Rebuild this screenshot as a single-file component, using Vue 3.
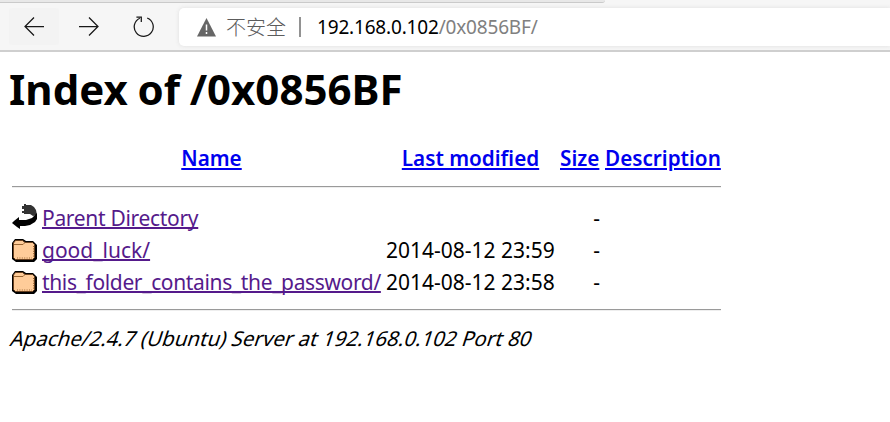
<script setup>
const rows = [
  { icon: 'back', name: 'Parent Directory', date: '', cls: 'parent' },
  { icon: 'folder', name: 'good_luck/', date: '2014-08-12 23:59', cls: 'luck' },
  { icon: 'folder', name: 'this_folder_contains_the_password/', date: '2014-08-12 23:58', cls: 'password' },
]
</script>

<template>
  <div class="window">
    <div class="tabs"><div class="tab-edge"></div></div>
    <nav class="toolbar">
      <button class="tool hovered" aria-label="Back">
        <svg width="20" height="20" viewBox="0 0 20 20"><path d="M20 9.5H1M10 0.5L1 9.5L10 18.5" /></svg>
      </button>
      <button class="tool" aria-label="Forward">
        <svg width="20" height="20" viewBox="0 0 20 20"><path d="M0 9.5H19M10 0.5L19 9.5L10 18.5" /></svg>
      </button>
      <button class="tool" aria-label="Reload">
        <svg width="22" height="22" viewBox="0 0 22 22"><path d="M14.2 2A9.5 9.5 0 1 1 6.8 2.2M3.4 1H8.3V6" /></svg>
      </button>
      <div class="address">
        <svg class="warning" width="19" height="19" viewBox="0 0 19 19">
          <path d="M9.5 0L19 18.5H0Z" fill="#666" />
          <path d="M9.5 6.5V12.5M9.5 14V16" stroke="#fff" stroke-width="1.5" />
        </svg>
        <span class="insecure">不安全</span>
        <span class="divider"></span>
        <span class="url"><span class="host">192.168.0.102</span>/0x0856BF/</span>
      </div>
    </nav>
    <main>
      <h1><span>Index of /0x0856BF</span></h1>
      <div class="row head">
        <a class="name-head">Name</a>
        <a class="modified">Last modified</a>
        <a class="size-head">Size</a>
        <a class="description">Description</a>
      </div>
      <hr class="first" />
      <div v-for="row in rows" :key="row.name" class="row">
        <svg v-if="row.icon === 'back'" class="icon" width="25" height="26" viewBox="0 0 25 26">
          <path d="M10 2H12V0H14V1H19L22 3L24 6L25 11L21 12L18 10H12V9H10V7H12V5H10Z" fill="#333" />
          <path d="M25 9V15L23 18L18 21L13 22H8V25L5 23L0 19L2 17L7 13V16H14L20 14L24 10Z" fill="#000" />
        </svg>
        <svg v-else class="icon folder" width="25" height="23" viewBox="0 0 25 23">
          <path d="M0 4L3 0H11L14 2H21L25 6V20L22 23H4L0 20Z" fill="#000" />
          <path d="M1.5 4L3.5 1.5H10.5L13 3.5H20.5L22.5 5.5V18.5L20.5 20.5H3.5L1.5 18.5Z" fill="#ffcc99" stroke="#68401f" stroke-width="1" />
          <path d="M2 5.5H11L13 3.5" fill="none" stroke="#996633" />
          <path d="M5 19H20M21.5 7V18" fill="none" stroke="#996633" stroke-dasharray="1 1.4" />
        </svg>
        <span class="name"><a :class="row.cls">{{ row.name }}</a></span>
        <span class="date">{{ row.date }}</span>
        <span class="size">-</span>
      </div>
      <hr class="last" />
      <address class="server"><span>Apache/2.4.7 (Ubuntu) Server at 192.168.0.102 Port 80</span></address>
    </main>
  </div>
</template>

<style>
body { margin: 0; background: #fff; overflow: hidden; }
</style>

<style scoped>
.window { width: 890px; height: 422px; overflow: hidden; color: #000; font-family: "Noto Sans", "Noto Sans CJK SC", sans-serif; }
.tabs { height: 3px; background: #f6f6f6; }
.tab-edge { box-sizing: border-box; width: 605px; height: 3px; background: #e8e8e8; border-bottom: 1px solid #cacaca; border-radius: 0 0 5px 0; }
.toolbar { box-sizing: border-box; height: 49px; display: flex; align-items: flex-start; gap: 5px; padding: 5px 0 0 9px; background: #f6f6f6; border-bottom: 2px solid #cfcfcf; }
.tool { width: 50px; height: 37px; display: flex; align-items: center; justify-content: center; padding: 0; border: 0; border-radius: 3px; background: transparent; }
.tool path { fill: none; stroke: #181818; stroke-width: 1.25; }
.hovered { background: #f3f3f3; }
.address { box-sizing: border-box; flex: 1; height: 38px; display: flex; align-items: center; margin-left: 5px; padding-left: 18px; border-radius: 5px 0 0 5px; background: #fff; box-shadow: 0 0 4px #dedede; white-space: nowrap; }
.insecure { margin-left: 10px; color: #5c5c5c; font: 300 20px/30px "Noto Sans CJK SC", sans-serif; }
.divider { width: 2px; height: 20px; margin: 0 16px 0 13px; background: #929292; }
.url { color: #808080; font-size: 19px; line-height: 30px; letter-spacing: -0.18px; }
.host { color: #000; }
main { box-sizing: border-box; padding-left: 9px; white-space: nowrap; }
h1 { margin: 0; height: 76px; font-size: 42px; line-height: 74px; font-weight: 700; word-spacing: -1.2px; }
.row { display: grid; grid-template-columns: 25px 339px 169px 40px 116px; column-gap: 5px; height: 32px; margin-left: 3px; align-items: center; font-size: 21px; line-height: 32px; }
.head { height: 58px; line-height: 61px; font-size: 20.7px; font-weight: 600; }
.head a { color: #0000ee; }
a { text-decoration: underline; text-decoration-thickness: 2px; text-underline-offset: 2px; text-decoration-skip-ink: auto; }
.name-head { grid-column: 1 / 3; justify-self: center; margin-left: 30px; }
.modified { justify-self: center; }
.name, .date, .size { box-sizing: border-box; height: 32px; padding-top: 1px; }
.name a { color: #551a8b; text-decoration-thickness: 1.5px; text-underline-offset: 1px; text-decoration-skip-ink: none; }
.parent { letter-spacing: -0.31px; }
.password { letter-spacing: -0.36px; }
.size { text-align: right; }
.icon { display: block; }
.folder { margin-top: 3px; }
hr { box-sizing: border-box; width: 709px; height: 2px; margin: 0 0 0 3px; border: 0; border-top: 1px solid #9a9a9a; border-bottom: 1px solid #eee; }
.first { margin-bottom: 13px; }
.last { margin-top: 12px; }
.server { font-size: 20.5px; line-height: 32px; font-style: normal; margin-top: 11px; }
.server span { display: inline-block; transform: skewX(-18deg); transform-origin: 0 75%; }
</style>
